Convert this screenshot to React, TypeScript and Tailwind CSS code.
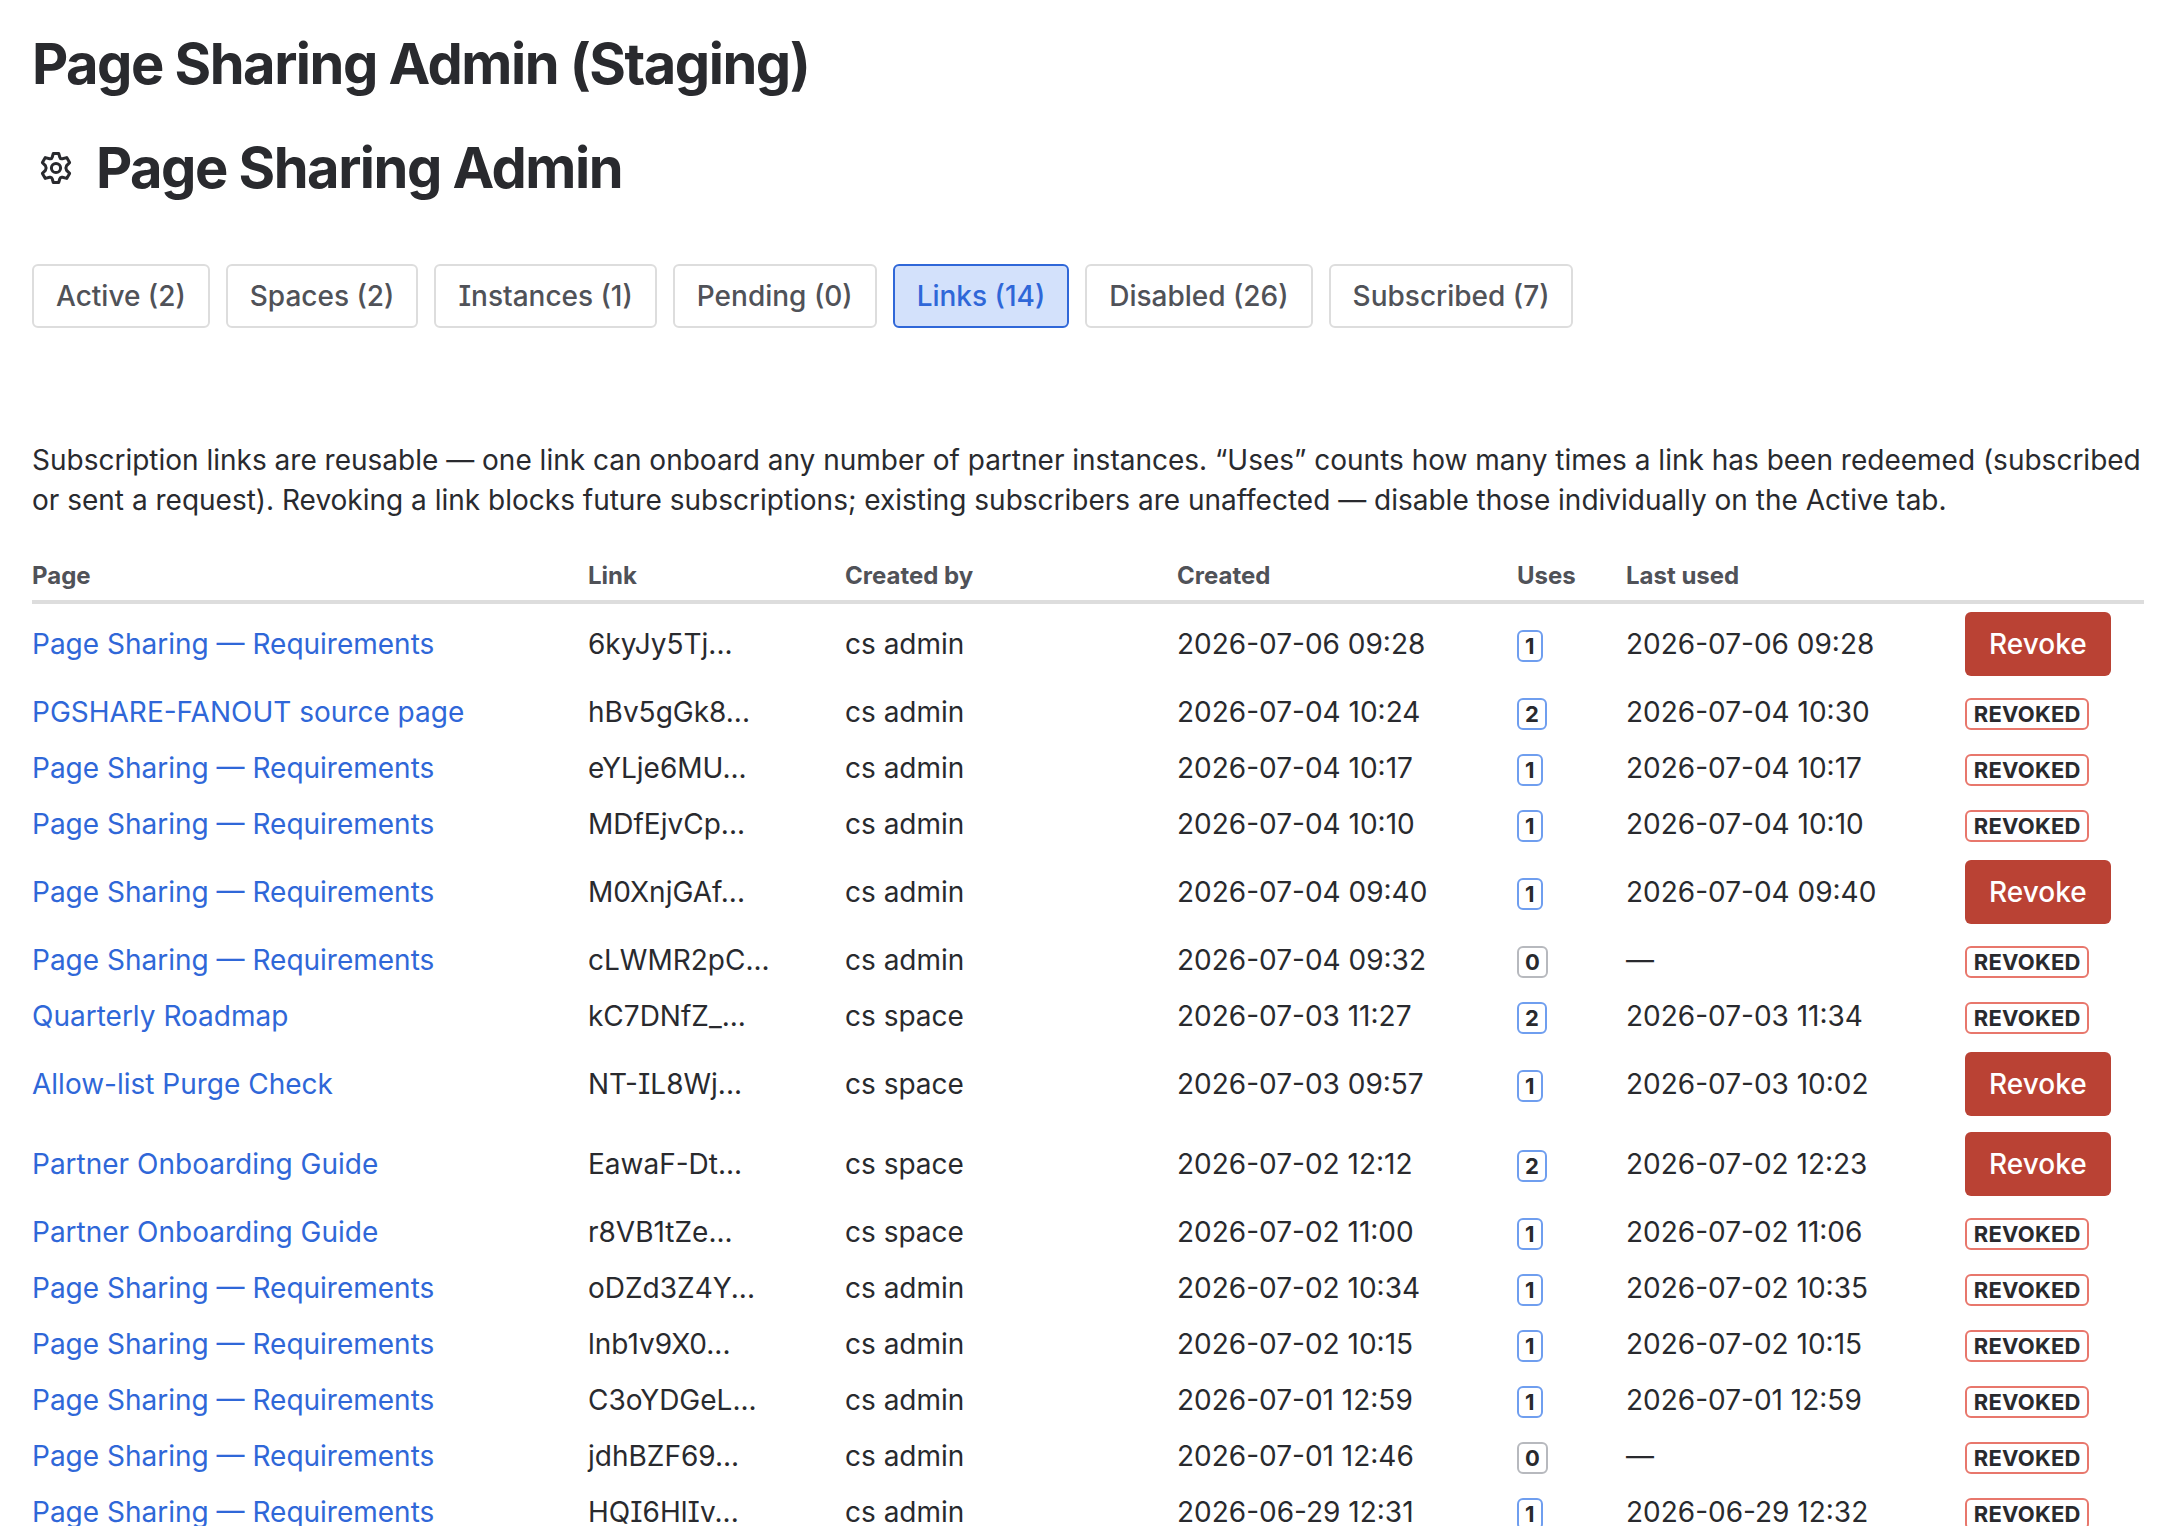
const tabs = [
  { label: 'Active (2)', active: false },
  { label: 'Spaces (2)', active: false },
  { label: 'Instances (1)', active: false },
  { label: 'Pending (0)', active: false },
  { label: 'Links (14)', active: true },
  { label: 'Disabled (26)', active: false },
  { label: 'Subscribed (7)', active: false },
]

const links = [
  { page: 'Page Sharing — Requirements', link: '6kyJy5Tj...', by: 'cs admin', created: '2026-07-06 09:28', uses: 1, lastUsed: '2026-07-06 09:28', revoked: false },
  { page: 'PGSHARE-FANOUT source page', link: 'hBv5gGk8...', by: 'cs admin', created: '2026-07-04 10:24', uses: 2, lastUsed: '2026-07-04 10:30', revoked: true },
  { page: 'Page Sharing — Requirements', link: 'eYLje6MU...', by: 'cs admin', created: '2026-07-04 10:17', uses: 1, lastUsed: '2026-07-04 10:17', revoked: true },
  { page: 'Page Sharing — Requirements', link: 'MDfEjvCp...', by: 'cs admin', created: '2026-07-04 10:10', uses: 1, lastUsed: '2026-07-04 10:10', revoked: true },
  { page: 'Page Sharing — Requirements', link: 'M0XnjGAf...', by: 'cs admin', created: '2026-07-04 09:40', uses: 1, lastUsed: '2026-07-04 09:40', revoked: false },
  { page: 'Page Sharing — Requirements', link: 'cLWMR2pC...', by: 'cs admin', created: '2026-07-04 09:32', uses: 0, lastUsed: '—', revoked: true },
  { page: 'Quarterly Roadmap', link: 'kC7DNfZ_...', by: 'cs space', created: '2026-07-03 11:27', uses: 2, lastUsed: '2026-07-03 11:34', revoked: true },
  { page: 'Allow-list Purge Check', link: 'NT-IL8Wj...', by: 'cs space', created: '2026-07-03 09:57', uses: 1, lastUsed: '2026-07-03 10:02', revoked: false },
  { page: 'Partner Onboarding Guide', link: 'EawaF-Dt...', by: 'cs space', created: '2026-07-02 12:12', uses: 2, lastUsed: '2026-07-02 12:23', revoked: false },
  { page: 'Partner Onboarding Guide', link: 'r8VB1tZe...', by: 'cs space', created: '2026-07-02 11:00', uses: 1, lastUsed: '2026-07-02 11:06', revoked: true },
  { page: 'Page Sharing — Requirements', link: 'oDZd3Z4Y...', by: 'cs admin', created: '2026-07-02 10:34', uses: 1, lastUsed: '2026-07-02 10:35', revoked: true },
  { page: 'Page Sharing — Requirements', link: 'lnb1v9X0...', by: 'cs admin', created: '2026-07-02 10:15', uses: 1, lastUsed: '2026-07-02 10:15', revoked: true },
  { page: 'Page Sharing — Requirements', link: 'C3oYDGeL...', by: 'cs admin', created: '2026-07-01 12:59', uses: 1, lastUsed: '2026-07-01 12:59', revoked: true },
  { page: 'Page Sharing — Requirements', link: 'jdhBZF69...', by: 'cs admin', created: '2026-07-01 12:46', uses: 0, lastUsed: '—', revoked: true },
  { page: 'Page Sharing — Requirements', link: 'HQI6HlIv...', by: 'cs admin', created: '2026-06-29 12:31', uses: 1, lastUsed: '2026-06-29 12:32', revoked: true },
]

function GearIcon() {
  return (
    <svg className="w-8 h-8" viewBox="0 0 32 32" fill="none" stroke="currentColor" strokeWidth="3" strokeLinejoin="round">
      <path d="M13.3 1.5h5.4l1.1 3.7q.6 2 2.6 1.5l4.3-1.1 2.9 5-3 3q-1.4 2.4 0 4.8l3 3-2.9 5-4.3-1.1q-2-.5-2.6 1.5l-1.1 3.7h-5.4l-1.1-3.7q-.6-2-2.6-1.5l-4.3 1.1-2.9-5 3-3q1.4-2.4 0-4.8l-3-3 2.9-5 4.3 1.1q2 .5 2.6-1.5z" />
      <circle cx="16" cy="16" r="4.6" />
    </svg>
  )
}

export default function App() {
  return (
    <div className="w-full h-[1526px] overflow-hidden bg-white pl-8 pr-10 pt-8 text-[28px] leading-10 text-[#292a2e] font-['Inter',sans-serif] [font-feature-settings:'cv08']">
      <h1 className="text-[56px] leading-16 font-bold tracking-[-1.5px]">Page Sharing Admin (Staging)</h1>

      <div className="mt-10 flex items-center gap-5">
        <div className="w-10 h-10 ml-1 flex items-center justify-center">
          <GearIcon />
        </div>
        <h2 className="text-[56px] leading-16 font-bold tracking-[-1.5px]">Page Sharing Admin</h2>
      </div>

      {/* Tabs */}
      <div className="mt-16 flex gap-4">
        {tabs.map((tab) => (
          <button
            key={tab.label}
            className={
              tab.active
                ? 'h-16 px-[22px] rounded-md border-2 border-[#2f67d8] bg-[#d3e1fb] text-[#2f67d8] font-medium whitespace-nowrap'
                : 'h-16 px-[22px] rounded-md border-2 border-[#dddddd] bg-white text-[#505258] font-medium whitespace-nowrap'
            }
          >
            {tab.label}
          </button>
        ))}
      </div>

      <p className="mt-28 whitespace-nowrap">
        Subscription links are reusable — one link can onboard any number of partner instances. “Uses” counts how many times a link has been redeemed (subscribed
        <br />
        or sent a request). Revoking a link blocks future subscriptions; existing subscribers are unaffected — disable those individually on the Active tab.
      </p>

      {/* Links table */}
      <table className="mt-8 w-[2112px] table-fixed border-separate border-spacing-0 text-left whitespace-nowrap">
        <colgroup>
          <col className="w-[556px]" />
          <col className="w-[257px]" />
          <col className="w-[332px]" />
          <col className="w-[340px]" />
          <col className="w-[109px]" />
          <col className="w-[339px]" />
          <col />
        </colgroup>
        <thead>
          <tr className="h-[52px] text-2xl text-[#505258]">
            <th className="p-0 border-b-4 border-[#dddddd] font-bold">Page</th>
            <th className="p-0 border-b-4 border-[#dddddd] font-bold">Link</th>
            <th className="p-0 border-b-4 border-[#dddddd] font-bold">Created by</th>
            <th className="p-0 border-b-4 border-[#dddddd] font-bold">Created</th>
            <th className="p-0 border-b-4 border-[#dddddd] font-bold">Uses</th>
            <th className="p-0 border-b-4 border-[#dddddd] font-bold">Last used</th>
            <th className="p-0 border-b-4 border-[#dddddd]" />
          </tr>
        </thead>
        <tbody>
          {links.map((item) => (
            <tr key={item.link} className={item.revoked ? 'h-14' : 'h-20'}>
              <td className="p-0">
                <a href="#" className="text-[#2f67d8]">{item.page}</a>
              </td>
              <td className="p-0">{item.link}</td>
              <td className="p-0">{item.by}</td>
              <td className="p-0">{item.created}</td>
              <td className="p-0">
                <span
                  className={
                    item.uses > 0
                      ? 'mt-1 flex w-fit h-8 items-center px-1.5 rounded-md border-2 border-[#6f9eef] text-[22px] font-bold'
                      : 'mt-1 flex w-fit h-8 items-center px-1.5 rounded-md border-2 border-[#b7b9be] text-[22px] font-bold'
                  }
                >
                  {item.uses}
                </span>
              </td>
              <td className="p-0">{item.lastUsed}</td>
              <td className="p-0">
                {item.revoked ? (
                  <span className="mt-1 flex w-fit h-8 items-center px-[6.8px] rounded-md border-2 border-[#e8776c] text-[22px] font-bold tracking-[0.2px]">REVOKED</span>
                ) : (
                  <button className="block h-16 px-6 rounded-md bg-[#ba4234] text-white font-medium">Revoke</button>
                )}
              </td>
            </tr>
          ))}
        </tbody>
      </table>
    </div>
  )
}
